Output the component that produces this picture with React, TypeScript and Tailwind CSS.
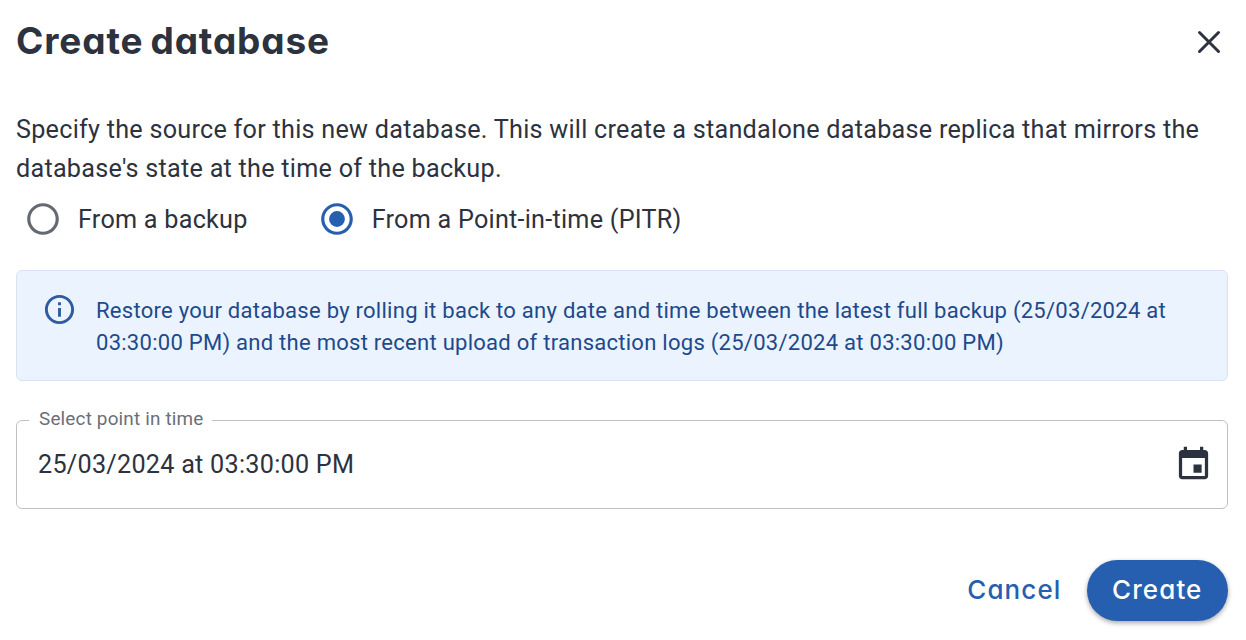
import React from "react";

function Radio({ checked, label }: { checked?: boolean; label: string }) {
  return (
    <label className="flex items-center">
      <svg viewBox="0 0 24 24" className={checked ? "mb-px size-[38px] text-[#265fb0]" : "mb-px size-[38px] text-[#656971]"} fill="currentColor">
        <path d="M12 2C6.48 2 2 6.48 2 12s4.48 10 10 10 10-4.48 10-10S17.52 2 12 2zm0 18c-4.42 0-8-3.58-8-8s3.58-8 8-8 8 3.58 8 8-3.58 8-8 8z" />
        {checked && <circle cx="12" cy="12" r="5" />}
      </svg>
      <span className="ml-4 whitespace-nowrap text-[25.2px] leading-[39px] tracking-[0.25px]">{label}</span>
    </label>
  );
}

export default function App() {
  return (
    <div className="flex h-[640px] w-[1246px] flex-col bg-white pr-[18px] pl-4 font-['Roboto',sans-serif] text-[#2c323e]">
      <header className="flex h-[84px] items-center justify-between">
        <h1 className="-mt-[2px] whitespace-nowrap font-['Inter',sans-serif] text-[37px] leading-[48px] font-bold tracking-[0.87px] [word-spacing:-2.5px] [font-feature-settings:'cv11']">Create database</h1>
        <button aria-label="Close" className="mr-[-1px]">
          <svg viewBox="0 0 40 40" className="size-10" fill="none" stroke="currentColor" strokeWidth="3">
            <path d="M10.5 10.5 29.5 29.5M29.5 10.5 10.5 29.5" strokeLinecap="round" />
          </svg>
        </button>
      </header>

      <p className="mt-[26px] whitespace-nowrap text-[25.2px] leading-[39px] tracking-[0.255px]">
        Specify the source for this new database. This will create a standalone database replica that mirrors the
        <br />
        database's state at the time of the backup.
      </p>

      <div className="mt-[12px] flex gap-[70px] pl-2">
        <Radio label="From a backup" />
        <Radio checked label="From a Point-in-time (PITR)" />
      </div>

      <section className="mt-[31px] flex h-[111px] shrink-0 rounded-[6px] border border-[#d8e3f3] bg-[#ebf3ff] pt-[21px] pl-[25px] text-[#1d4a8b]">
        <svg viewBox="0 0 24 24" className="size-[35px] shrink-0 text-[#2e5c9f]" fill="currentColor">
          <path d="M11 7h2v2h-2zm0 4h2v6h-2zm1-9C6.48 2 2 6.48 2 12s4.48 10 10 10 10-4.48 10-10S17.52 2 12 2zm0 18c-4.41 0-8-3.59-8-8s3.59-8 8-8 8 3.59 8 8-3.59 8-8 8z" />
        </svg>
        <p className="mt-[3px] ml-[19px] whitespace-nowrap text-[22.05px] leading-8 tracking-[0.25px]">
          Restore your database by rolling it back to any date and time between the latest full backup (25/03/2024 at
          <br />
          03:30:00 PM) and the most recent upload of transaction logs (25/03/2024 at 03:30:00 PM)
        </p>
      </section>

      <fieldset className="mt-[26px] h-[102px] shrink-0 rounded-[6px] border border-[#bfc0c3] pr-[14px] pl-3">
        <legend className="h-[27px] pr-[8px] pl-[10px] text-[18.9px] leading-[24px] tracking-[0.18px] whitespace-nowrap text-[#6b6f78]">Select point in time</legend>
        <div className="flex h-[60px] items-center justify-between pl-[9px]">
          <span className="whitespace-nowrap text-[25.2px] leading-[39px] tracking-[0.26px]">25/03/2024 at 03:30:00 PM</span>
          <svg viewBox="0 0 24 24" className="size-[39px]" fill="currentColor">
            <path d="M17 12h-5v5h5v-5zM16 1v2H8V1H6v2H5c-1.11 0-1.99.9-1.99 2L3 19c0 1.1.89 2 2 2h14c1.1 0 2-.9 2-2V5c0-1.1-.9-2-2-2h-1V1h-2zm3 18H5V8h14v11z" />
          </svg>
        </div>
      </fieldset>

      <footer className="mt-[51px] flex shrink-0 items-center justify-end gap-[25px] font-['Inter',sans-serif] text-[26px] leading-[39px] font-medium tracking-[1.1px] [font-feature-settings:'cv11']">
        <button className="-mt-[2px] whitespace-nowrap text-[#265fb0]">Cancel</button>
        <button className="h-[61px] w-[141.5px] rounded-full bg-[#265fb0] pb-[2px] whitespace-nowrap text-white shadow-[0_2px_5px_rgba(0,0,0,0.35)]">Create</button>
      </footer>
    </div>
  );
}
